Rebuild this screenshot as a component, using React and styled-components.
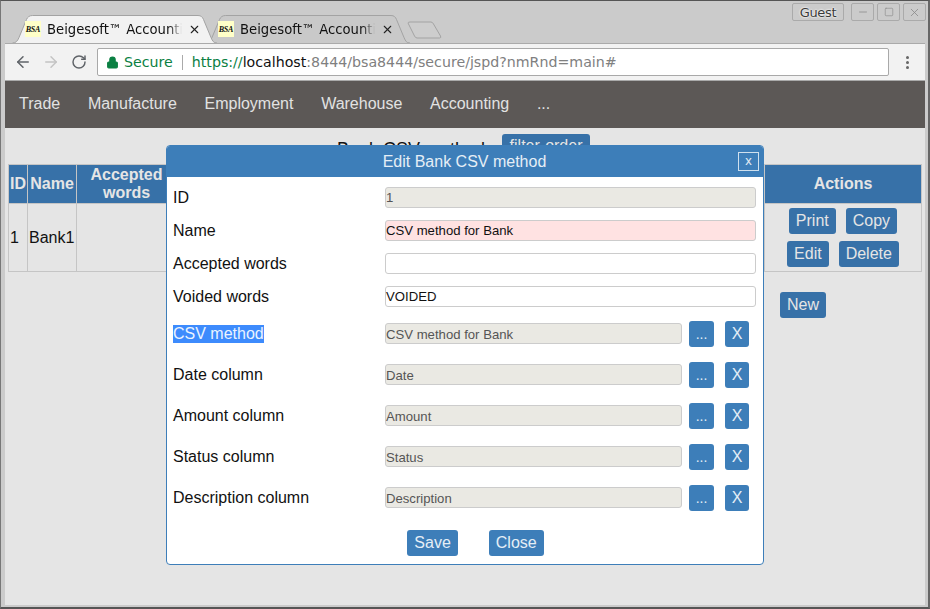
import React from "react";
import styled, { createGlobalStyle } from "styled-components";
import { ArrowLeft, ArrowRight, RotateCw, Lock, X as XIcon, Minus, Square } from "lucide-react";

const Global = createGlobalStyle`
  html, body { margin: 0; padding: 0; height: 100%; overflow: hidden; background: #ccc; }
  #root { height: 100%; }
  * { box-sizing: border-box; }
`;

const Win = styled.div`
  width: 930px; height: 609px; display: flex; flex-direction: column;
  background: #cbcbcb; border-top: 1px solid #555; border-left: 1px solid #777; border-right: 2px solid #666;
  border-bottom: 2px solid #555; padding: 0 3px 2px 3px; position: relative;
  font-family: "Liberation Sans", Arial, sans-serif;
`;
const TitleBar = styled.div`
  height: 42px; flex: none; position: relative; display: flex; align-items: flex-end; padding-left: 8px;
`;
const Tab = styled.div`
  position: relative; width: 205px; height: 28px; margin-right: -12px; display: flex; align-items: center;
  padding: 0 0 0 13px; z-index: ${(p) => (p.$active ? 2 : 1)};
  font: 13.2px "DejaVu Sans", sans-serif; color: #111;
`;
const TabShape = styled.svg`
  position: absolute; left: 0; top: 0; width: 205px; height: 28px;
`;
const Favicon = styled.div`
  position: relative; width: 16px; height: 16px; background: #ffffc8; flex: none; margin-right: 6px;
  font: italic bold 8px "Liberation Serif", serif; color: #111; display: flex; align-items: center; justify-content: center;
  letter-spacing: -0.2px;
`;
const TabTitle = styled.div`
  position: relative; width: 135px; overflow: hidden; white-space: nowrap;
  -webkit-mask-image: linear-gradient(to right, #000 122px, transparent 135px);
  mask-image: linear-gradient(to right, #000 122px, transparent 135px);
`;
const TabClose = styled.div`
  position: relative; margin-left: 6px; display: flex; color: #222;
`;
const NewTab = styled.svg`
  position: relative; width: 36px; height: 18px; margin-left: 9px; margin-bottom: 4px; flex: none;
`;
const WinControls = styled.div`
  position: absolute; top: 2px; right: -1px; display: flex; gap: 3px;
`;
const GuestBtn = styled.div`
  width: 52px; height: 18px; border: 1px solid #aaa; border-radius: 2px; margin-right: 4px;
  font: 13px "DejaVu Sans", sans-serif; color: #3a3a3a; display: flex; align-items: center; justify-content: center;
  letter-spacing: -0.3px; text-shadow: 0 0 2px #fff, 0 0 2px #fff;
`;
const CtrlBtn = styled.div`
  width: 23px; height: 18px; border: 1px solid #aaa; border-radius: 2px; color: #8a8a8a;
  display: flex; align-items: center; justify-content: center;
`;
const Toolbar = styled.div`
  height: 38px; flex: none; background: #f2f2f2; border-top: 1px solid #aaa; display: flex; align-items: center;
  padding: 0 0 0 4px; margin-left: 1px; border-bottom: 1px solid #aaa;
`;
const NavIcon = styled.div`
  width: 28px; display: flex; justify-content: center; color: ${(p) => p.$c};
`;
const UrlBox = styled.div`
  width: 792px; height: 28px; margin-left: 4px; background: #fff; border: 1px solid #a9a9a9; border-radius: 2px;
  display: flex; align-items: center; padding-left: 8px;
  font: 14.2px "DejaVu Sans", sans-serif; white-space: nowrap; color: #808080;
`;
const SecureText = styled.span`
  color: #0b8043; margin-left: 5px; padding-right: 9px; border-right: 1px solid #aaa; line-height: 15px;
`;
const UrlText = styled.span`
  margin-left: 9px;
`;
const Https = styled.span` color: #0b8043; `;
const Host = styled.span` color: #111; `;
const Kebab = styled.div`
  margin-left: 17px; display: flex; flex-direction: column; gap: 2px;
`;
const Dot = styled.div`
  width: 3px; height: 3px; background: #666; border-radius: 50%;
`;
const Nav = styled.nav`
  height: 47px; flex: none; background: #5c5856; display: flex; align-items: center; padding: 0 0 2px 14px;
  margin-left: 1px; gap: 27.7px; color: #e2e2e2; font-size: 16px;
`;
const Content = styled.div`
  flex: 1; background: #e5e5e5; position: relative; margin-left: 1px; padding: 6px 3px 0 3px;
`;
const Heading = styled.div`
  display: flex; justify-content: center; align-items: center; gap: 8px; font-size: 18px; color: #111; height: 31px;
  padding-right: 3px; margin-bottom: -1px;
`;
const FilterBtn = styled.span`
  background: #3771a8; color: #e5e5e5; padding: 3px 7.5px 3px; border-radius: 3px; font-size: 16px; line-height: 18px; margin-top: -8px;
`;
const Table = styled.table`
  border-collapse: collapse; width: 914px; table-layout: fixed; font-size: 16px; color: #111;
  th, td { border: 1px solid #c5c5c5; padding: 0; }
`;
const Th = styled.th`
  background: #3771a8; color: #e5e5e5; height: 39px; line-height: 18px; text-align: center; font-size: 16px;
`;
const Td = styled.td`
  height: 68px; padding: 0 1px !important;
`;
const ActionTd = styled.td`
  text-align: center; vertical-align: top; padding-top: 4px !important;
`;
const ActionRow = styled.div`
  display: flex; justify-content: center; gap: 10px; margin-bottom: 7px;
  &:last-child { margin-bottom: 0; }
`;
const DimBtn = styled.span`
  background: #3771a8; color: #e5e5e5; height: 26px; padding: 0 7px; border-radius: 3px; display: flex; align-items: center;
`;
const NewRow = styled.div`
  display: flex; padding: 20px 0 0 772px; font-size: 16px;
`;
const Modal = styled.div`
  position: absolute; left: 161px; top: 17px; width: 598px; height: 420px; background: #fff;
  border: 1px solid #3d7eb9; border-radius: 4px; display: flex; flex-direction: column;
`;
const ModalHead = styled.div`
  height: 31px; flex: none; background: #3d7eb9; color: #e5eef6; font-size: 16px; display: flex; align-items: center;
  justify-content: center; position: relative; border-radius: 3px 3px 0 0; padding-right: 1px;
`;
const CloseX = styled.div`
  position: absolute; right: 4px; top: 6px; width: 21px; height: 19px; border: 1px solid #cfe0ee; display: flex;
  align-items: center; justify-content: center; font-size: 13px; line-height: 1; padding-bottom: 2px;
`;
const ModalBody = styled.div`
  padding: 4px 7px 0 6px; flex: 1; display: flex; flex-direction: column;
`;
const Row = styled.div`
  display: grid; grid-template-columns: 212px 1fr; align-items: center; height: 33px; font-size: 16px; color: #111;
`;
const PickRow = styled.div`
  display: grid; grid-template-columns: 212px 297px 32px 35px; align-items: center; height: 41px; font-size: 16px; color: #111;
`;
const Selected = styled.span`
  background: #3d8bfd; color: #eaf3ff; justify-self: start;
`;
const Field = styled.div`
  height: 21px; border: 1px solid #ccc; border-radius: 3px; font-size: 13.15px; line-height: 18px;
  padding-top: ${(p) => (p.$pick ? 2 : 1)}px; margin-top: ${(p) => (p.$pick ? 0 : -1)}px;
  color: ${(p) => (p.$bg === "#eae9e3" ? "#555" : "#111")};
  background: ${(p) => p.$bg}; white-space: pre;
`;
const PickBtn = styled.div`
  background: #3d7eb9; color: #e5eef6; height: 26px; width: ${(p) => p.$w}px; border-radius: 3px; display: flex; align-items: center; justify-content: center;
  font-size: ${(p) => p.$fs}px; margin-left: ${(p) => p.$ml}px;
`;
const Footer = styled.div`
  display: flex; justify-content: center; gap: 31px; padding-top: 12px; padding-left: 22px;
`;
const ModalBtn = styled.div`
  background: #3d7eb9; color: #e5eef6; height: 26px; padding: 0 7px; border-radius: 3px; display: flex; align-items: center; font-size: 16px;
`;

const tabPath = "M0.5 28 C4 28 5.5 26 7 22.5 L14.5 4.5 C15.5 2 17.5 0.5 20.5 0.5 L186 0.5 C189 0.5 190.5 2 191.5 4.5 L199 22.5 C200.5 26 201.5 28 205 28";

function BrowserTab({ active }) {
  return (
    <Tab $active={active}>
      <TabShape viewBox="0 0 205 28">
        <path d={tabPath} fill={active ? "#f2f2f2" : "#c9c9c9"} stroke="#a3a3a3" />
      </TabShape>
      <Favicon>BSA</Favicon>
      <TabTitle>Beigesoft™ Accounting</TabTitle>
      <TabClose><XIcon size={13} strokeWidth={2} /></TabClose>
    </Tab>
  );
}

const simple = [
  ["ID", "1", "#eae9e3"],
  ["Name", "CSV method for Bank", "#ffe2e2"],
  ["Accepted words", "", "#fff"],
  ["Voided words", "VOIDED", "#fff"],
];
const picks = [
  ["CSV method", "CSV method for Bank"],
  ["Date column", "Date"],
  ["Amount column", "Amount"],
  ["Status column", "Status"],
  ["Description column", "Description"],
];

export default function App() {
  return (
    <Win>
      <Global />
      <TitleBar>
        <BrowserTab active />
        <BrowserTab />
        <NewTab viewBox="0 0 36 18">
          <path d="M1 2 Q1 1 3 1 L24 1 Q25.5 1 26.5 3 L33.5 15 Q34.5 17 32.5 17 L10 17 Q8.5 17 7.5 15 Z" fill="#cdcdcd" stroke="#a3a3a3" />
        </NewTab>
        <WinControls>
          <GuestBtn>Guest</GuestBtn>
          <CtrlBtn><Minus size={12} strokeWidth={1.5} /></CtrlBtn>
          <CtrlBtn><Square size={10} strokeWidth={1.5} /></CtrlBtn>
          <CtrlBtn><XIcon size={13} strokeWidth={1.5} /></CtrlBtn>
        </WinControls>
      </TitleBar>
      <Toolbar>
        <NavIcon $c="#5f6368"><ArrowLeft size={18} strokeWidth={2} /></NavIcon>
        <NavIcon $c="#c4c4c4"><ArrowRight size={18} strokeWidth={2} /></NavIcon>
        <NavIcon $c="#5f6368"><RotateCw size={16} strokeWidth={2.2} /></NavIcon>
        <UrlBox>
          <Lock size={13} color="#0b8043" fill="#0b8043" strokeWidth={2} />
          <SecureText>Secure</SecureText>
          <UrlText><Https>https://</Https><Host>localhost</Host>:8444/bsa8444/secure/jspd?nmRnd=main#</UrlText>
        </UrlBox>
        <Kebab><Dot /><Dot /><Dot /></Kebab>
      </Toolbar>
      <Nav>
        <span>Trade</span><span>Manufacture</span><span>Employment</span><span>Warehouse</span><span>Accounting</span><span>...</span>
      </Nav>
      <Content>
        <Heading>Bank CSV methods <FilterBtn>filter-order</FilterBtn></Heading>
        <Table>
          <colgroup>
            <col style={{ width: 19 }} /><col style={{ width: 49 }} /><col style={{ width: 100 }} /><col /><col style={{ width: 157 }} />
          </colgroup>
          <thead>
            <tr><Th>ID</Th><Th>Name</Th><Th>Accepted words</Th><Th>Voided words</Th><Th>Actions</Th></tr>
          </thead>
          <tbody>
            <tr>
              <Td>1</Td><Td>Bank1</Td><Td></Td><Td></Td>
              <ActionTd>
                <ActionRow><DimBtn>Print</DimBtn><DimBtn>Copy</DimBtn></ActionRow>
                <ActionRow><DimBtn>Edit</DimBtn><DimBtn>Delete</DimBtn></ActionRow>
              </ActionTd>
            </tr>
          </tbody>
        </Table>
        <NewRow><DimBtn>New</DimBtn></NewRow>
        <Modal>
          <ModalHead>Edit Bank CSV method<CloseX>x</CloseX></ModalHead>
          <ModalBody>
            {simple.map(([l, v, bg]) => (
              <Row key={l}><span>{l}</span><Field $bg={bg}>{v}</Field></Row>
            ))}
            {picks.map(([l, v], i) => (
              <PickRow key={l}>
                {i === 0 ? <Selected>{l}</Selected> : <span>{l}</span>}
                <Field $pick $bg="#eae9e3">{v}</Field>
                <PickBtn $w={25} $fs={14} $ml={7}>...</PickBtn>
                <PickBtn $w={24} $fs={16} $ml={11}>X</PickBtn>
              </PickRow>
            ))}
            <Footer><ModalBtn>Save</ModalBtn><ModalBtn>Close</ModalBtn></Footer>
          </ModalBody>
        </Modal>
      </Content>
    </Win>
  );
}
